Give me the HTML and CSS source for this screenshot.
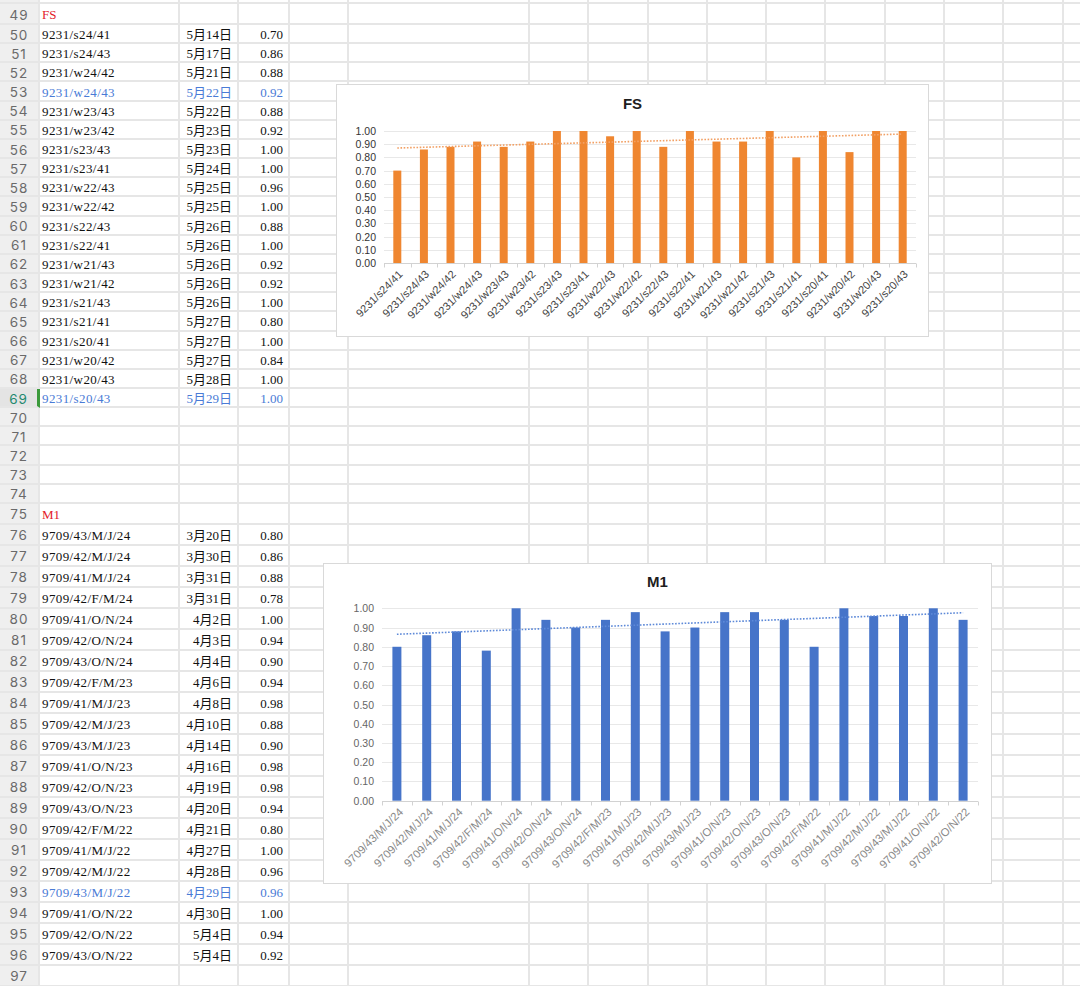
FILE: index.html
```html
<!DOCTYPE html>
<html lang="zh">
<head>
  <meta charset="UTF-8">
  <meta name="viewport" content="width=device-width, initial-scale=1.0">
  <title>Past Paper Scores</title>
  <link rel="stylesheet" href="styles.css">
</head>
<body>
  <div class="sheet" id="sheet"></div>
  <div class="chart chart-fs" id="chartFs"></div>
  <div class="chart chart-m1" id="chartM1"></div>

  <script>
    const fsRows = [
      ["9231/s24/41", "5月14日", 0.70],
      ["9231/s24/43", "5月17日", 0.86],
      ["9231/w24/42", "5月21日", 0.88],
      ["9231/w24/43", "5月22日", 0.92, "blue"],
      ["9231/w23/43", "5月22日", 0.88],
      ["9231/w23/42", "5月23日", 0.92],
      ["9231/s23/43", "5月23日", 1.00],
      ["9231/s23/41", "5月24日", 1.00],
      ["9231/w22/43", "5月25日", 0.96],
      ["9231/w22/42", "5月25日", 1.00],
      ["9231/s22/43", "5月26日", 0.88],
      ["9231/s22/41", "5月26日", 1.00],
      ["9231/w21/43", "5月26日", 0.92],
      ["9231/w21/42", "5月26日", 0.92],
      ["9231/s21/43", "5月26日", 1.00],
      ["9231/s21/41", "5月27日", 0.80],
      ["9231/s20/41", "5月27日", 1.00],
      ["9231/w20/42", "5月27日", 0.84],
      ["9231/w20/43", "5月28日", 1.00],
      ["9231/s20/43", "5月29日", 1.00, "blue"]
    ];

    const m1Rows = [
      ["9709/43/M/J/24", "3月20日", 0.80],
      ["9709/42/M/J/24", "3月30日", 0.86],
      ["9709/41/M/J/24", "3月31日", 0.88],
      ["9709/42/F/M/24", "3月31日", 0.78],
      ["9709/41/O/N/24", "4月2日", 1.00],
      ["9709/42/O/N/24", "4月3日", 0.94],
      ["9709/43/O/N/24", "4月4日", 0.90],
      ["9709/42/F/M/23", "4月6日", 0.94],
      ["9709/41/M/J/23", "4月8日", 0.98],
      ["9709/42/M/J/23", "4月10日", 0.88],
      ["9709/43/M/J/23", "4月14日", 0.90],
      ["9709/41/O/N/23", "4月16日", 0.98],
      ["9709/42/O/N/23", "4月19日", 0.98],
      ["9709/43/O/N/23", "4月20日", 0.94],
      ["9709/42/F/M/22", "4月21日", 0.80],
      ["9709/41/M/J/22", "4月27日", 1.00],
      ["9709/42/M/J/22", "4月28日", 0.96],
      ["9709/43/M/J/22", "4月29日", 0.96, "blue"],
      ["9709/41/O/N/22", "4月30日", 1.00],
      ["9709/42/O/N/22", "5月4日", 0.94],
      ["9709/43/O/N/22", "5月4日", 0.92]
    ];

    const COLS = 16; // row number + A..O
    const currentRow = 69;
    const sheet = document.getElementById("sheet");

    function addRow(num, rowClass, cells) {
      const row = document.createElement("div");
      row.className = "row " + rowClass + (num === currentRow ? " current" : "");
      const head = document.createElement("div");
      head.className = "rownum";
      head.textContent = num || "";
      row.appendChild(head);
      for (let c = 1; c < COLS; c++) {
        const cell = document.createElement("div");
        cell.className = "cell";
        const item = cells[c - 1];
        if (item) {
          cell.textContent = item.text;
          if (item.cls) cell.className += " " + item.cls;
        }
        row.appendChild(cell);
      }
      sheet.appendChild(row);
    }

    function dataCells(r) {
      const tone = r[3] ? " " + r[3] : "";
      return [
        { text: r[0], cls: "code" + tone },
        { text: r[1], cls: "num date" + tone },
        { text: r[2].toFixed(2), cls: "num" + tone }
      ];
    }

    // row 48 is scrolled almost out of view, only its bottom edge shows
    addRow(null, "short", []);
    addRow(49, "tall", [{ text: "FS", cls: "label" }]);
    fsRows.forEach((r, i) => addRow(50 + i, "short", dataCells(r)));
    for (let n = 70; n <= 74; n++) addRow(n, "short", []);
    addRow(75, "tall", [{ text: "M1", cls: "label" }]);
    m1Rows.forEach((r, i) => addRow(76 + i, "tall", dataCells(r)));
    addRow(97, "tall", []);

    function drawChart(id, cfg, rows) {
      const values = rows.map(r => r[2]);
      const n = values.length;
      const step = (cfg.right - cfg.left) / n;
      const yOf = v => cfg.bottom - v * (cfg.bottom - cfg.top);
      const cx = i => cfg.left + step * (i + 0.5);

      let svg = `<svg width="${cfg.w}" height="${cfg.h}" viewBox="0 0 ${cfg.w} ${cfg.h}">`;
      svg += `<text class="chart-title" x="${cfg.w / 2}" y="${cfg.titleY}" text-anchor="middle">${cfg.title}</text>`;

      // gridlines and value axis
      for (let k = 0; k <= 10; k++) {
        const y = Math.round(yOf(k / 10)) + 0.5;
        svg += `<line class="${k === 0 ? "axis" : "grid"}" x1="${cfg.left}" y1="${y}" x2="${cfg.right}" y2="${y}"/>`;
        svg += `<text class="axis-label" x="${cfg.labelX}" y="${y + 3.5}" text-anchor="end">${(k / 10).toFixed(2)}</text>`;
      }

      // category ticks
      for (let i = 0; i <= n; i++) {
        const x = Math.round(cfg.left + step * i) + 0.5;
        const y = Math.round(cfg.bottom) + 0.5;
        svg += `<line class="axis" x1="${x}" y1="${y}" x2="${x}" y2="${y + 4}"/>`;
      }

      // bars
      values.forEach((v, i) => {
        const top = yOf(v);
        svg += `<rect class="bar" x="${cx(i) - cfg.barW / 2}" y="${top}" width="${cfg.barW}" height="${cfg.bottom - top}"/>`;
      });

      // linear trendline
      const mx = (n - 1) / 2;
      const my = values.reduce((a, b) => a + b, 0) / n;
      let sxy = 0, sxx = 0;
      values.forEach((v, i) => { sxy += (i - mx) * (v - my); sxx += (i - mx) * (i - mx); });
      const slope = sxy / sxx;
      const y0 = my - slope * mx;
      const y1 = my + slope * mx;
      svg += `<line class="trend" x1="${cx(0)}" y1="${yOf(y0)}" x2="${cx(n - 1)}" y2="${yOf(y1)}"/>`;

      // category labels
      rows.forEach((r, i) => {
        svg += `<text class="cat-label" text-anchor="end" transform="translate(${cx(i) + cfg.dx} ${cfg.bottom + cfg.dy}) rotate(-45)">${r[0]}</text>`;
      });

      svg += "</svg>";
      document.getElementById(id).innerHTML = svg;
    }

    drawChart("chartFs", {
      title: "FS", w: 593, h: 253, titleY: 25,
      left: 48, right: 580, top: 47, bottom: 179,
      labelX: 40, barW: 8, dx: 6, dy: 12
    }, fsRows);

    drawChart("chartM1", {
      title: "M1", w: 669, h: 321, titleY: 24,
      left: 59, right: 655, top: 45.3, bottom: 237.7,
      labelX: 51, barW: 9, dx: 7, dy: 12
    }, m1Rows.slice(0, 20));
  </script>
</body>
</html>
```

FILE: styles.css
```css
body {
  margin: 0;
  background-color: #fff;
  overflow: hidden;
  font-family: "Liberation Serif", "Noto Sans CJK SC", serif;
  color: #111;
}
.sheet {
  margin-top: -15px;
}
.row {
  display: grid;
  grid-template-columns: 40px 140px 59px 51px 59px 181px repeat(10, 59.3px);
  height: 19.16px;
}
.row.tall {
  height: 21px;
}
.row:first-child {
  height: 19px;
}
.rownum,
.cell {
  box-sizing: border-box;
  border-right: 2px solid #e6e6e6;
  border-bottom: 2px solid #e6e6e6;
  overflow: hidden;
  white-space: nowrap;
  display: flex;
  align-items: center;
  padding-top: 2px;
}
.rownum {
  background-color: #efefef;
  justify-content: center;
  font-family: Inter, "Liberation Sans", sans-serif;
  font-size: 13.5px;
  letter-spacing: 1px;
  color: #6a6a6a;
}
.current .rownum {
  background-color: #e4e4e4;
  border-right: 3px solid #3b9a3b;
  color: #23896f;
}
.cell {
  font-size: 13px;
  line-height: 15px;
  padding-left: 2px;
  padding-right: 5px;
}
.cell.code {
  letter-spacing: 0.4px;
}
.cell.num {
  justify-content: flex-end;
}
.cell.date {
  letter-spacing: 0;
}
.cell.blue {
  color: #4a7bd6;
}
.cell.label {
  color: #e3202a;
}

.chart {
  position: absolute;
  box-sizing: border-box;
  background-color: #fff;
  border: 1px solid #d9d9d9;
}
.chart svg {
  display: block;
  margin: -1px;
}
.chart-fs {
  left: 336px;
  top: 84px;
  width: 593px;
  height: 253px;
}
.chart-m1 {
  left: 323px;
  top: 563px;
  width: 669px;
  height: 321px;
}
.chart-title {
  font-family: "Liberation Sans", sans-serif;
  font-size: 15px;
  font-weight: bold;
  fill: #1e1e1e;
}
.axis-label,
.cat-label {
  font-family: "Liberation Sans", sans-serif;
  font-size: 10.5px;
}
.cat-label {
  font-size: 11px;
}
.grid {
  stroke: #e8e8e8;
  stroke-width: 1;
}
.axis {
  stroke: #d2d2d2;
  stroke-width: 1;
}
.trend {
  stroke-width: 1.6;
  stroke-dasharray: 1.6 1.6;
}
.chart-fs .bar { fill: #ef8630; }
.chart-fs .trend { stroke: #f2a064; }
.chart-fs .axis-label { fill: #333; }
.chart-fs .cat-label { fill: #444; }
.chart-m1 .bar { fill: #4674c9; }
.chart-m1 .trend { stroke: #5d89d8; }
.chart-m1 .axis-label { fill: #666; }
.chart-m1 .cat-label { fill: #888; font-size: 11.3px; }
```
